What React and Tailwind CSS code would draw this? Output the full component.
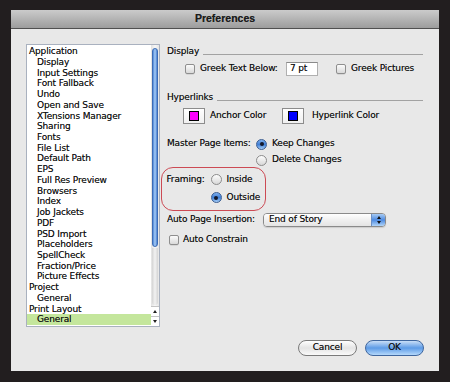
import React from "react";

const items = [
  ["Application", 0], ["Display", 1], ["Input Settings", 1], ["Font Fallback", 1], ["Undo", 1],
  ["Open and Save", 1], ["XTensions Manager", 1], ["Sharing", 1], ["Fonts", 1], ["File List", 1],
  ["Default Path", 1], ["EPS", 1], ["Full Res Preview", 1], ["Browsers", 1], ["Index", 1],
  ["Job Jackets", 1], ["PDF", 1], ["PSD Import", 1], ["Placeholders", 1], ["SpellCheck", 1],
  ["Fraction/Price", 1], ["Picture Effects", 1], ["Project", 0], ["General", 1], ["Print Layout", 0],
  ["General", 1, true],
];

function Checkbox() {
  return <div className="w-[10px] h-[10px] shrink-0 rounded-[2px] border border-[#8e8e8e] bg-gradient-to-b from-[#fbfbfb] to-[#d9d9d9] shadow-[0_0.5px_0.5px_rgba(0,0,0,0.15)]" />;
}

function Radio({ on }) {
  if (on)
    return (
      <div className="w-[11px] h-[11px] shrink-0 rounded-full border border-[#3b5e92] bg-gradient-to-b from-[#7fb0ee] via-[#3f7fd6] to-[#a5cdf6] flex items-center justify-center">
        <div className="w-[4px] h-[4px] rounded-full bg-[#14182a]" />
      </div>
    );
  return <div className="w-[11px] h-[11px] shrink-0 rounded-full border border-[#8c8c8c] bg-gradient-to-b from-[#fdfdfd] to-[#d8d8d8]" />;
}

function Header({ label }) {
  return (
    <div className="h-[12px] flex items-center pl-[7px]">
      <span>{label}</span>
      <div className="flex-1 h-px bg-[#a2a2a2] ml-[4px] mt-[5px]" />
    </div>
  );
}

function Swatch({ color }) {
  return (
    <div className="w-[22px] h-[16px] shrink-0 border border-[#8c8c8c] bg-gradient-to-b from-white to-[#f0f0f0] flex items-center justify-center">
      <div className="w-[10px] h-[10px] border border-black" style={{ background: color }} />
    </div>
  );
}

export default function App() {
  return (
    <div className="w-[450px] h-[382px] bg-[#221e1f] pt-[10px] pl-[11px] overflow-hidden font-['DejaVu_Sans',sans-serif] text-[9px] tracking-[-0.15px] text-[#111] [text-shadow:0_0_0.4px_rgba(0,0,0,0.55)]">
      <div className="w-[428px] h-[361px] flex flex-col bg-[#e8e8e8]">
        <div className="h-[19px] shrink-0 bg-gradient-to-b from-[#cbcbcb] to-[#9d9d9d] border-b border-[#505050] flex items-center justify-center">
          <span className="font-['Liberation_Sans',sans-serif] font-bold text-[10.5px] tracking-normal text-[#1c1c1c]">Preferences</span>
        </div>
        <div className="flex-1 flex">
          {/* list */}
          <div className="pl-[15px] pt-[15px]">
            <div className="w-[134px] h-[283px] border border-[#a9b1bf] bg-white flex">
              <div className="w-[124px] pt-[1.3px]">
                {items.map(([t, lvl, sel], i) => (
                  <div
                    key={i}
                    className={`h-[10.72px] leading-[10.72px] whitespace-nowrap ${lvl ? "pl-[10px]" : "pl-[2px]"} ${sel ? "bg-[#c4e69c] w-[125px]" : ""}`}
                  >
                    {t}
                  </div>
                ))}
              </div>
              <div className="w-[8px] flex flex-col bg-gradient-to-r from-[#e2e2e2] via-[#f7f7f7] to-[#e6e6e6]">
                <div className="flex-1 flex flex-col items-center pt-[3px] pb-[1px]">
                  <div className="w-[6px] h-[199px] rounded-full border border-[#3c6cb5] bg-gradient-to-r from-[#4d86d8] via-[#a9cdf4] to-[#4a80d2]" />
                  <div className="w-[6px] flex-1 mt-[1px] rounded-b-full bg-gradient-to-r from-[#d4d4d4] via-[#f2f2f2] to-[#d4d4d4]" />
                </div>
                <div className="h-[10px] border-t border-[#c4c4c4] flex items-center justify-center bg-white">
                  <div className="w-0 h-0 border-l-[2.5px] border-r-[2.5px] border-b-[3px] border-l-transparent border-r-transparent border-b-[#222]" />
                </div>
                <div className="h-[10px] border-t border-[#c4c4c4] flex items-center justify-center bg-white">
                  <div className="w-0 h-0 border-l-[2.5px] border-r-[2.5px] border-t-[3px] border-l-transparent border-r-transparent border-t-[#222]" />
                </div>
              </div>
            </div>
          </div>

          {/* right */}
          <div className="flex-1 flex flex-col pt-[17px] pr-[16px]">
            <Header label="Display" />
            <div className="h-[16px] mt-[3px] flex items-center pl-[25px]">
              <div className="w-[101px] flex items-center gap-[5px]">
                <Checkbox />
                <span className="whitespace-nowrap">Greek Text Below:</span>
              </div>
              <div className="w-[32px] h-[14px] bg-white border border-[#b0b0b0] border-t-[#8a8a8a] pl-[3px] flex items-center">7 pt</div>
              <div className="ml-[18px] flex items-center gap-[5px]">
                <Checkbox />
                <span className="whitespace-nowrap">Greek Pictures</span>
              </div>
            </div>

            <div className="mt-[15px]">
              <Header label="Hyperlinks" />
            </div>
            <div className="h-[16px] mt-[4px] flex items-center pl-[23px]">
              <div className="w-[99px] flex items-center gap-[5px]">
                <Swatch color="#ff00ff" />
                <span className="whitespace-nowrap">Anchor Color</span>
              </div>
              <div className="flex items-center gap-[8px]">
                <Swatch color="#0000ff" />
                <span className="whitespace-nowrap">Hyperlink Color</span>
              </div>
            </div>

            <div className="h-[12px] mt-[14px] flex items-center pl-[7px]">
              <span className="w-[89px] whitespace-nowrap">Master Page Items:</span>
              <Radio on />
              <span className="ml-[5px]">Keep Changes</span>
            </div>
            <div className="h-[12px] mt-[4px] flex items-center pl-[96px]">
              <Radio />
              <span className="ml-[5px]">Delete Changes</span>
            </div>

            <div className="mt-[1px] ml-[1px] w-[105px] h-[44px] rounded-[12px] border-[1.5px] border-[#cc4a54] pl-[4.5px] pt-[5.5px]">
              <div className="h-[12px] flex items-center">
                <span className="w-[44px]">Framing:</span>
                <Radio />
                <span className="ml-[5px]">Inside</span>
              </div>
              <div className="h-[12px] mt-[6px] flex items-center pl-[44px]">
                <Radio on />
                <span className="ml-[5px]">Outside</span>
              </div>
            </div>

            <div className="h-[14px] mt-[2px] flex items-center pl-[7px]">
              <span className="w-[96px] whitespace-nowrap">Auto Page Insertion:</span>
              <div className="w-[123px] h-[14px] rounded-[4px] border border-[#8a8a8a] flex overflow-hidden shadow-[0_1px_1px_rgba(0,0,0,0.12)]">
                <div className="flex-1 bg-gradient-to-b from-white via-[#f0f0f0] to-[#e4e4e4] pl-[5px] flex items-center">End of Story</div>
                <div className="w-[14px] border-l border-[#6b8fc4] bg-gradient-to-b from-[#a7cbf4] via-[#4d8ae0] to-[#b2d5f8] flex flex-col items-center justify-center gap-[1.5px]">
                  <div className="w-0 h-0 border-l-[2.5px] border-r-[2.5px] border-b-[3px] border-l-transparent border-r-transparent border-b-[#111]" />
                  <div className="w-0 h-0 border-l-[2.5px] border-r-[2.5px] border-t-[3px] border-l-transparent border-r-transparent border-t-[#111]" />
                </div>
              </div>
            </div>

            <div className="h-[12px] mt-[7px] flex items-center pl-[9px] gap-[4px]">
              <Checkbox />
              <span>Auto Constrain</span>
            </div>

            <div className="mt-auto mb-[15px] -mr-[1px] flex justify-end gap-[8px]">
              <div className="w-[59px] h-[16px] rounded-full border border-[#7a7a7a] bg-gradient-to-b from-white via-[#e4e4e4] to-[#fafafa] flex items-center justify-center">Cancel</div>
              <div className="w-[59px] h-[16px] rounded-full border border-[#3f669e] bg-gradient-to-b from-[#c9def6] via-[#5d9be6] to-[#b4d8fb] flex items-center justify-center">OK</div>
            </div>
          </div>
        </div>
      </div>
    </div>
  );
}
